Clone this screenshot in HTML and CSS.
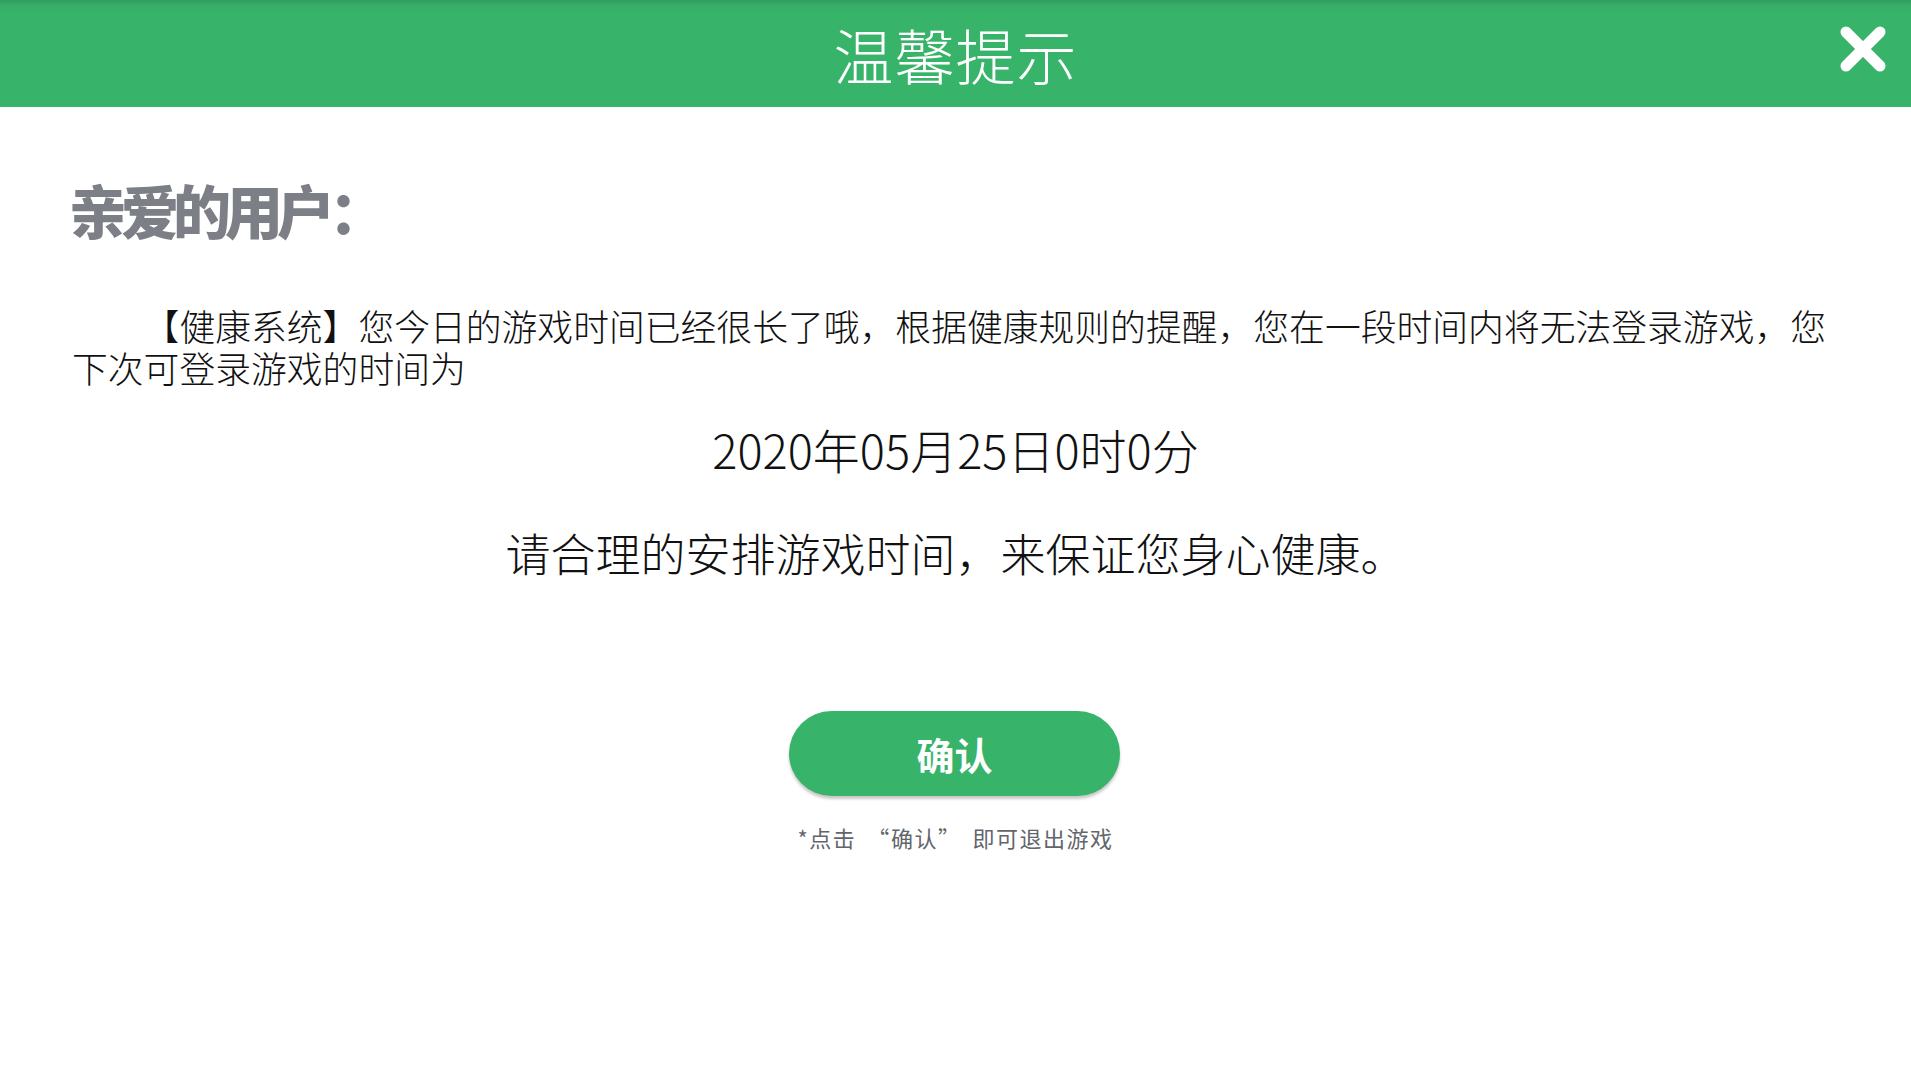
FILE: index.html
```html
<!DOCTYPE html>
<html lang="zh-CN">
<head>
<meta charset="utf-8">
<title>温馨提示</title>
<link rel="stylesheet" href="styles.css">
</head>
<body>
<header class="topbar">
  <h1 class="title">温馨提示</h1>
  <button class="close" aria-label="关闭">
    <svg viewBox="0 0 48 46" width="48" height="46">
      <path d="M7 6 L41 40 M41 6 L7 40" stroke="#ffffff" stroke-width="11" stroke-linecap="round" fill="none"/>
    </svg>
  </button>
</header>
<main class="content">
  <h2 class="greet">亲爱的用户：</h2>
  <p class="notice">【健康系统】您今日的游戏时间已经很长了哦，根据健康规则的提醒，您在一段时间内将无法登录游戏，您下次可登录游戏的时间为</p>
  <p class="date">2020年05月25日0时0分</p>
  <p class="slogan">请合理的安排游戏时间，来保证您身心健康。</p>
  <div class="actions">
    <button class="confirm">确认</button>
  </div>
  <p class="hint">*点击<span class="q-open">“</span>确认<span class="q-close">”</span>即可退出游戏</p>
</main>
</body>
</html>
```

FILE: styles.css
```css
html, body {
  margin: 0;
  padding: 0;
  background: #ffffff;
}
body {
  font-family: "Noto Sans CJK SC", "Noto Sans", sans-serif;
  color: #1c1c1c;
  width: 1911px;
  height: 1079px;
  overflow: hidden;
}
.topbar {
  position: relative;
  height: 107px;
  background: linear-gradient(to bottom, #2f9d5c 0px, #36ad67 5px, #38b36a 12px, #38b36a 100%);
  display: flex;
  align-items: center;
  justify-content: center;
}
.title {
  margin: 0;
  font-size: 60px;
  font-weight: 300;
  line-height: 60px;
  color: #ffffff;
  letter-spacing: 1px;
}
.close {
  position: absolute;
  right: 24px;
  top: 26px;
  width: 48px;
  height: 46px;
  padding: 0;
  border: 0;
  background: transparent;
  display: block;
}
.close svg {
  display: block;
}
.content {
  padding: 0 72px;
}
.greet {
  margin: 73px 0 0 0;
  font-size: 58px;
  line-height: 58px;
  font-weight: 900;
  color: #7c8086;
  letter-spacing: -6px;
  margin-left: -3px;
}
.notice {
  margin: 66px 0 0 0;
  font-size: 35.8px;
  line-height: 42px;
  font-weight: 300;
  text-indent: 2em;
  color: #111111;
}
.date {
  margin: 36px 0 0 0;
  font-size: 47px;
  line-height: 50px;
  font-weight: 300;
  text-align: center;
  color: #111111;
}
.slogan {
  margin: 54px 0 0 0;
  font-size: 45px;
  line-height: 50px;
  font-weight: 300;
  text-align: center;
  color: #111111;
}
.actions {
  margin-top: 133px;
  display: flex;
  justify-content: center;
}
.confirm {
  width: 331px;
  height: 85px;
  border: 0;
  border-radius: 43px;
  background: #38b36a;
  color: #ffffff;
  font-family: "Noto Sans CJK SC", sans-serif;
  font-size: 38px;
  font-weight: 700;
  box-shadow: 0 3px 3px rgba(0, 0, 0, 0.22);
  padding: 0;
  margin-left: -2px;
}
.hint {
  margin: 26px 0 0 0;
  font-size: 22px;
  line-height: 30px;
  font-weight: 400;
  letter-spacing: 1.5px;
  text-align: center;
  color: #62666c;
}
.q-open {
  margin-left: 11px;
}
.q-close {
  margin-right: 11px;
}
```
